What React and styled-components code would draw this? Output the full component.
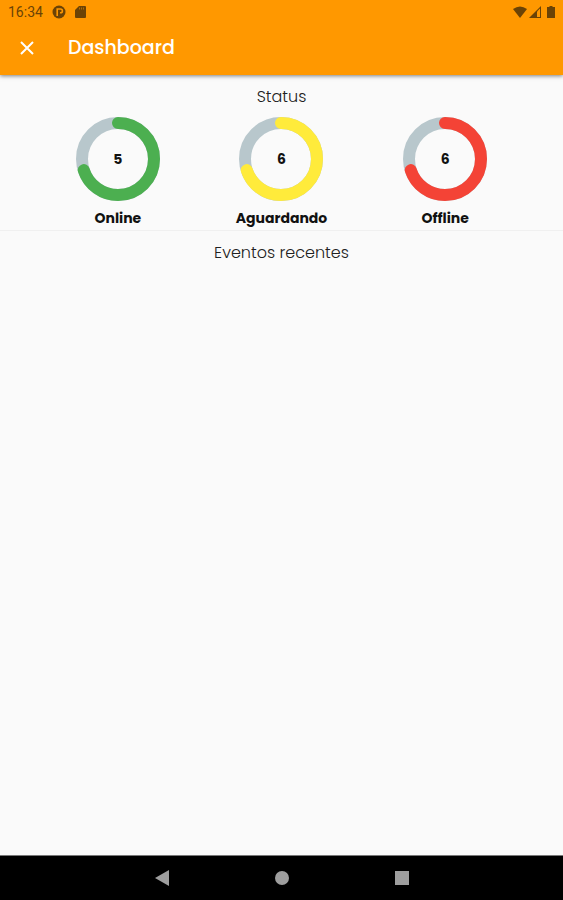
import React from 'react';
import styled, { createGlobalStyle } from 'styled-components';

const GlobalStyle = createGlobalStyle`
  * {
    box-sizing: border-box;
  }
  body {
    margin: 0;
    background: #fafafa;
    color: #212121;
    font-family: Poppins, Inter, sans-serif;
  }
`;

const Page = styled.div`
  display: flex;
  flex-direction: column;
  min-height: 100vh;
`;

const Header = styled.header`
  height: 75px;
  background: #ff9800;
  box-shadow: 0 1px 4px rgba(0, 0, 0, 0.5);
`;

const StatusBar = styled.div`
  display: flex;
  align-items: center;
  justify-content: space-between;
  height: 24px;
  padding: 0 8px;
  color: #6b4306;
  font-family: Roboto, sans-serif;
  font-size: 14px;
`;

const StatusGroup = styled.div`
  display: flex;
  align-items: center;
  gap: ${(props) => props.$gap};
  & svg {
    display: block;
  }
`;

const Toolbar = styled.div`
  display: flex;
  align-items: center;
  gap: 28px;
  height: 48px;
  padding: 0 14px;
`;

const IconButton = styled.button`
  display: flex;
  align-items: center;
  justify-content: center;
  width: 26px;
  height: 26px;
  padding: 0;
  border: 0;
  background: none;
  color: #fff;
  cursor: pointer;
`;

const Title = styled.h1`
  margin: 0;
  color: #fff;
  font-size: 19px;
  font-weight: 500;
  line-height: 24px;
`;

const Main = styled.main`
  flex: 1;
`;

const Section = styled.section`
  padding: 11px 0 2px;
`;

const SectionTitle = styled.h2`
  margin: 0;
  font-size: 16px;
  font-weight: 300;
  line-height: 22px;
  text-align: center;
`;

const Divider = styled.hr`
  margin: 0;
  border: 0;
  border-top: 1px solid #f0f0f0;
`;

const Indicators = styled.div`
  display: flex;
  justify-content: space-evenly;
  margin-top: 9px;
`;

const Indicator = styled.div`
  display: flex;
  flex-direction: column;
  align-items: center;
  gap: 7px;
`;

const Ring = styled.div`
  display: grid;
  place-items: center;
  width: 84px;
  height: 84px;
  & > * {
    grid-area: 1 / 1;
  }
`;

const Label = styled.span`
  color: #111;
  font-size: 14px;
  font-weight: 700;
  line-height: 20px;
`;

const NavBar = styled.nav`
  display: flex;
  align-items: center;
  justify-content: center;
  gap: 94px;
  height: 45px;
  border-top: 1px solid #777;
  background: #000;
  & button {
    color: #9e9e9e;
  }
`;

const statuses = [
  { label: 'Online', count: 5, color: '#4caf50' },
  { label: 'Aguardando', count: 6, color: '#ffeb3b' },
  { label: 'Offline', count: 6, color: '#f44336' },
];

const StatusIndicator = ({ label, count, color }) => (
  <Indicator>
    <Ring>
      <svg width="84" height="84" viewBox="0 0 84 84" fill="none" strokeWidth="12">
        <circle cx="42" cy="42" r="36" stroke="#b8c7cc" />
        <circle
          cx="42"
          cy="42"
          r="36"
          stroke={color}
          strokeLinecap="round"
          pathLength="100"
          strokeDasharray="70 100"
          transform="rotate(-90 42 42)"
        />
      </svg>
      <Label>{count}</Label>
    </Ring>
    <Label>{label}</Label>
  </Indicator>
);

const App = () => (
  <>
    <GlobalStyle />
    <Page>
      <Header>
        <StatusBar>
          <StatusGroup $gap="9px">
            <span>16:34</span>
            <svg width="14" height="14" viewBox="0 0 14 14">
              <circle cx="7" cy="7" r="6.5" fill="currentColor" />
              <path d="M5.2 11V4h3.3a1.9 1.9 0 0 1 0 3.8H8" fill="none" stroke="#ff9800" strokeWidth="1.6" />
            </svg>
            <svg width="11" height="12" viewBox="0 0 11 12">
              <path d="M4 0h6a1 1 0 0 1 1 1v10a1 1 0 0 1-1 1H1a1 1 0 0 1-1-1V4z" fill="currentColor" />
              <path d="M4.5 1.5v2M6.5 1.5v2M8.5 1.5v2" stroke="#ff9800" strokeWidth="0.5" />
            </svg>
          </StatusGroup>
          <StatusGroup $gap="2px">
            <svg width="14" height="12" viewBox="0 0 14 12">
              <path d="M0 3Q7-2 14 3L7 12z" fill="currentColor" />
            </svg>
            <svg width="12" height="12" viewBox="0 0 12 12">
              <path d="M12 0v12H0z" fill="currentColor" />
              <path d="M8 5.5 11 2.5V11H8z" fill="#ff9800" />
            </svg>
            <svg width="12" height="12" viewBox="0 0 12 12">
              <path d="M4 1h2.500V0h3v1H12v11H4z" fill="currentColor" />
            </svg>
          </StatusGroup>
        </StatusBar>
        <Toolbar>
          <IconButton aria-label="Fechar">
            <svg width="14" height="14" viewBox="0 0 14 14">
              <path d="M1 1l12 12M13 1L1 13" stroke="currentColor" strokeWidth="2" />
            </svg>
          </IconButton>
          <Title>Dashboard</Title>
        </Toolbar>
      </Header>
      <Main>
        <Section>
          <SectionTitle>Status</SectionTitle>
          <Indicators>
            {statuses.map((status) => (
              <StatusIndicator key={status.label} {...status} />
            ))}
          </Indicators>
        </Section>
        <Divider />
        <Section>
          <SectionTitle>Eventos recentes</SectionTitle>
        </Section>
      </Main>
      <NavBar>
        <IconButton aria-label="Voltar">
          <svg width="16" height="16" viewBox="0 0 16 16">
            <path d="M15 0v16L1 8z" fill="currentColor" />
          </svg>
        </IconButton>
        <IconButton aria-label="Início">
          <svg width="14" height="14" viewBox="0 0 14 14">
            <circle cx="7" cy="7" r="7" fill="currentColor" />
          </svg>
        </IconButton>
        <IconButton aria-label="Recentes">
          <svg width="14" height="14" viewBox="0 0 14 14">
            <path d="M0 0h14v14H0z" fill="currentColor" />
          </svg>
        </IconButton>
      </NavBar>
    </Page>
  </>
);

export default App;
